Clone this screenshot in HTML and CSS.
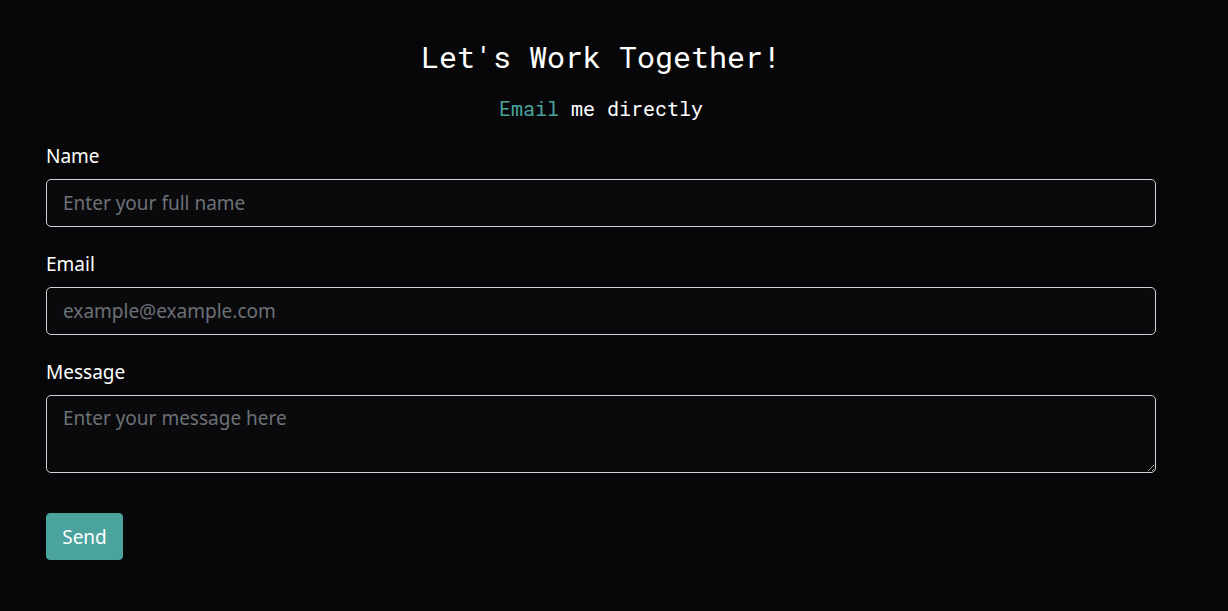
FILE: index.html
```html
<!DOCTYPE html>
<html lang="en">
<head>
<meta charset="utf-8">
<title>Contact</title>
<link rel="stylesheet" href="styles.css">
</head>
<body>
<main class="container">
  <h1 class="title">Let's Work Together!</h1>
  <p class="subtitle"><a class="accent" href="#">Email</a> me directly</p>
  <form class="form">
    <div class="group">
      <label class="label" for="name">Name</label>
      <input class="control" id="name" type="text" placeholder="Enter your full name">
    </div>
    <div class="group">
      <label class="label" for="email">Email</label>
      <input class="control" id="email" type="email" placeholder="example@example.com">
    </div>
    <div class="group">
      <label class="label" for="msg">Message</label>
      <textarea class="control area" id="msg" placeholder="Enter your message here"></textarea>
    </div>
    <button class="btn" type="button">Send</button>
  </form>
</main>
</body>
</html>
```
FILE: styles.css
```css
html, body {
  margin: 0;
  padding: 0;
  background: #070709;
  color: #ffffff;
}
body {
  font-family: "Noto Sans", "Open Sans", sans-serif;
}
.container {
  width: 1110px;
  margin: 0 0 0 46px;
  padding-top: 37px;
}
.title {
  font-family: "Roboto Mono", "DejaVu Sans Mono", monospace;
  font-weight: 400;
  font-size: 30px;
  line-height: 40px;
  text-align: center;
  margin: 0 0 16px 0;
  letter-spacing: 0;
}
.subtitle {
  font-family: "Roboto Mono", "DejaVu Sans Mono", monospace;
  font-weight: 400;
  font-size: 20px;
  line-height: 30px;
  text-align: center;
  margin: 0 0 18px 0;
}
.accent {
  color: #4aa39c;
  text-decoration: none;
  font-weight: 400;
}
.form {
  display: flex;
  flex-direction: column;
}
.group {
  display: flex;
  flex-direction: column;
  margin-bottom: 22px;
}
.label {
  font-size: 19px;
  line-height: 30px;
  margin-bottom: 8px;
  color: #ffffff;
}
.control {
  box-sizing: border-box;
  width: 100%;
  height: 48px;
  padding: 8px 16px;
  font-family: inherit;
  font-size: 19px;
  line-height: 29px;
  color: #ffffff;
  background: #0a0a0c;
  border: 1px solid #cfd2d6;
  border-radius: 5px;
  outline: none;
}
.control::placeholder {
  color: #6c7177;
}
.area {
  height: 78px;
  resize: vertical;
  display: block;
}
.group:last-of-type {
  margin-bottom: 40px;
}
.btn {
  align-self: flex-start;
  width: 77px;
  height: 47px;
  padding: 0;
  font-family: inherit;
  font-size: 19px;
  color: #ffffff;
  background: #4aa39c;
  border: 1px solid #4aa39c;
  border-radius: 4px;
}
```
